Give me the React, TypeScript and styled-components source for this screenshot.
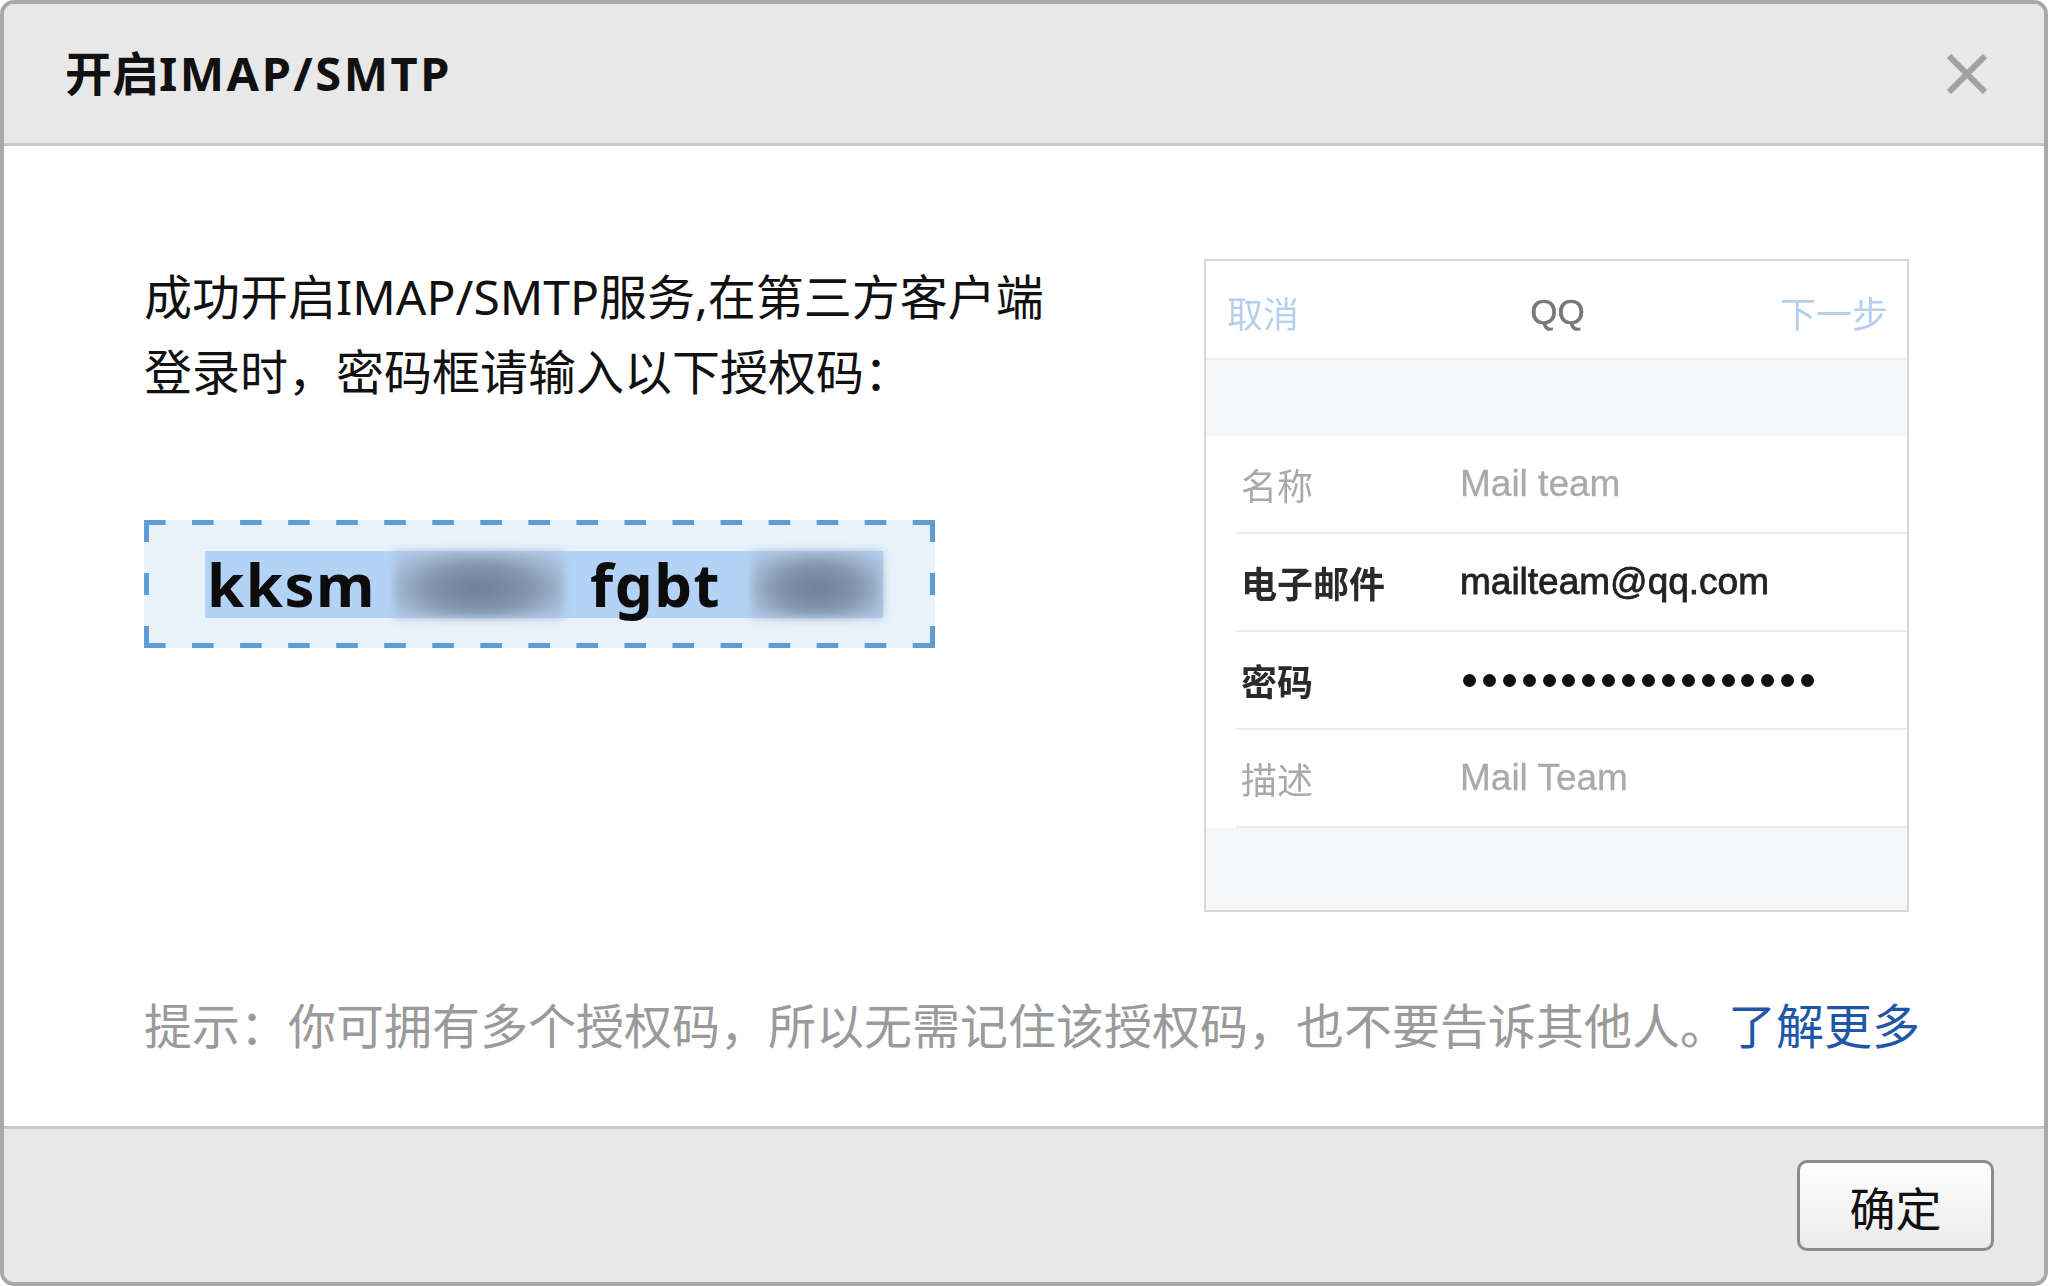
import React from 'react';
import styled, { createGlobalStyle } from 'styled-components';

const GlobalStyle = createGlobalStyle`
  html, body {
    margin: 0;
    padding: 0;
    background: #ffffff;
  }
  body {
    font-family: "Noto Sans", "Noto Sans CJK SC", sans-serif;
  }
`;

interface FieldRow {
  label: string;
  value?: string;
  strong: boolean;
  secret?: boolean;
}

const rows: FieldRow[] = [
  { label: '名称', value: 'Mail team', strong: false },
  { label: '电子邮件', value: 'mailteam@qq.com', strong: true },
  { label: '密码', strong: true, secret: true },
  { label: '描述', value: 'Mail Team', strong: false },
];

const App = () => {
  return (
    <>
      <GlobalStyle />
      <Dialog>
        <Header>
          <Title>
            开启<Latin>IMAP/SMTP</Latin>
          </Title>
          <CloseButton aria-label="关闭">
            <svg width="40" height="40" viewBox="0 0 40 40">
              <path d="M2 2 L38 38 M38 2 L2 38" stroke="#a2a2a2" strokeWidth="6" fill="none" />
            </svg>
          </CloseButton>
        </Header>

        <Body>
          <TopRow>
            <LeftColumn>
              <Intro>
                成功开启IMAP/SMTP服务,在第三方客户端
                <br />
                登录时，密码框请输入以下授权码：
              </Intro>
              <CodeBox>
                <Selection>
                  <Word $gap={18}>kksm</Word>
                  <Masked $w={170} $gap={24} />
                  <Word $gap={30}>fgbt</Word>
                  <Masked $w={132} />
                </Selection>
              </CodeBox>
            </LeftColumn>

            <Phone>
              <NavBar>
                <NavAction $align="left">取消</NavAction>
                <NavTitle>QQ</NavTitle>
                <NavAction $align="right">下一步</NavAction>
              </NavBar>
              <Spacer />
              {rows.map((row) => (
                <Row key={row.label}>
                  <RowInner>
                    <Label $strong={row.strong}>{row.label}</Label>
                    {row.secret ? (
                      <Dots>
                        {Array.from({ length: 18 }).map((_, i) => (
                          <Dot key={i} />
                        ))}
                      </Dots>
                    ) : (
                      <Value $strong={row.strong}>{row.value}</Value>
                    )}
                  </RowInner>
                </Row>
              ))}
              <BottomFill />
            </Phone>
          </TopRow>

          <Hint>
            提示：你可拥有多个授权码，所以无需记住该授权码，也不要告诉其他人。
            <MoreLink href="#">了解更多</MoreLink>
          </Hint>
        </Body>

        <Footer>
          <ConfirmButton>确定</ConfirmButton>
        </Footer>
      </Dialog>
    </>
  );
};

const Dialog = styled.div`
  width: 2048px;
  height: 1286px;
  box-sizing: border-box;
  border: 4px solid #a9a9a9;
  border-radius: 14px;
  overflow: hidden;
  display: flex;
  flex-direction: column;
  background: #ffffff;
`;

const Header = styled.header`
  flex: none;
  height: 142px;
  box-sizing: border-box;
  background: #e8e8e8;
  border-bottom: 3px solid #c8c8c8;
  display: flex;
  align-items: center;
  justify-content: space-between;
  padding: 0 57px 0 61px;
`;

const Title = styled.h1`
  margin: 0 0 6px;
  font-size: 47px;
  font-weight: 700;
  color: #111111;
`;

const Latin = styled.span`
  letter-spacing: 2.5px;
`;

const CloseButton = styled.button`
  width: 40px;
  height: 40px;
  padding: 0;
  border: none;
  background: transparent;
  display: flex;
  cursor: pointer;
`;

const Body = styled.main`
  flex: 1;
  padding: 113px 135px 0 140px;
  display: flex;
  flex-direction: column;
`;

const TopRow = styled.div`
  display: flex;
  justify-content: space-between;
  align-items: flex-start;
`;

const LeftColumn = styled.div`
  display: flex;
  flex-direction: column;
`;

const Intro = styled.p`
  margin: 0;
  font-size: 48px;
  line-height: 75px;
  color: #111111;
  white-space: nowrap;
`;

const dash = '#5e9dd1';

const CodeBox = styled.div`
  margin-top: 111px;
  width: 791px;
  height: 128px;
  box-sizing: border-box;
  display: flex;
  align-items: center;
  padding-left: 61px;
  background:
    linear-gradient(90deg, ${dash} 22px, transparent 22px) left top / 48.06px 5px repeat-x,
    linear-gradient(90deg, ${dash} 22px, transparent 22px) left bottom / 48.06px 5px repeat-x,
    linear-gradient(180deg, ${dash} 22px, transparent 22px) left top / 5px 53px repeat-y,
    linear-gradient(180deg, ${dash} 22px, transparent 22px) right top / 5px 53px repeat-y,
    #e9f2fa;
`;

const Selection = styled.div`
  display: flex;
  align-items: center;
  height: 67px;
  background: #b3d3f6;
`;

const Word = styled.span<{ $gap: number }>`
  font-family: "Noto Sans", sans-serif;
  font-size: 60px;
  font-weight: 700;
  line-height: 67px;
  color: #0c0c0c;
  letter-spacing: 1.5px;
  padding-left: 2px;
  margin-right: ${(p) => p.$gap}px;
`;

const Masked = styled.span<{ $w: number; $gap?: number }>`
  width: ${(p) => p.$w}px;
  height: 67px;
  margin-right: ${(p) => p.$gap ?? 0}px;
  background: radial-gradient(ellipse at 50% 55%, #6e7e96 0%, #8192aa 40%, #a6bcd7 75%, #b3cbe8 100%);
  filter: blur(4px);
`;

const Phone = styled.div`
  width: 705px;
  height: 653px;
  box-sizing: border-box;
  border: 2px solid #d7d7d7;
  display: flex;
  flex-direction: column;
  background: #ffffff;
  filter: blur(0.7px);
`;

const NavBar = styled.div`
  flex: none;
  height: 99px;
  box-sizing: border-box;
  display: grid;
  grid-template-columns: 1fr auto 1fr;
  align-items: center;
  padding: 4px 19px 0 21px;
  border-bottom: 2px solid #eef0f2;
`;

const NavAction = styled.span<{ $align: 'left' | 'right' }>`
  font-family: "Noto Sans CJK SC", sans-serif;
  font-size: 36px;
  color: #b5cfee;
  text-align: ${(p) => p.$align};
`;

const NavTitle = styled.span`
  font-family: "Liberation Sans", sans-serif;
  font-size: 35px;
  color: #777777;
  -webkit-text-stroke: 0.5px #777777;
`;

const Spacer = styled.div`
  flex: none;
  height: 76px;
  background: #f5f6f8;
`;

const Row = styled.div`
  flex: none;
  padding-left: 30px;
  background: #ffffff;
`;

const RowInner = styled.div`
  height: 96px;
  border-bottom: 2px solid #eaeaed;
  display: flex;
  align-items: center;
`;

const Label = styled.span<{ $strong: boolean }>`
  width: 224px;
  box-sizing: border-box;
  padding-left: 5px;
  font-family: "Noto Sans CJK SC", sans-serif;
  font-size: 36px;
  font-weight: ${(p) => (p.$strong ? 700 : 400)};
  color: ${(p) => (p.$strong ? '#2a2a2a' : '#a9a9a9')};
`;

const Value = styled.span<{ $strong: boolean }>`
  font-family: "Liberation Sans", sans-serif;
  font-size: 37px;
  color: ${(p) => (p.$strong ? '#222222' : '#aaaaaa')};
  -webkit-text-stroke: ${(p) => (p.$strong ? '0.8px #222222' : '0.3px #aaaaaa')};
`;

const Dots = styled.span`
  display: flex;
  gap: 6.9px;
  padding-left: 3px;
`;

const Dot = styled.span`
  width: 13px;
  height: 13px;
  border-radius: 50%;
  background: #111111;
`;

const BottomFill = styled.div`
  flex: 1;
  background: #f5f6f8;
`;

const Hint = styled.p`
  margin: 76px 0 0;
  font-size: 48px;
  line-height: 75px;
  color: #9a9a9a;
  white-space: nowrap;
`;

const MoreLink = styled.a`
  color: #1e57a8;
  text-decoration: none;
`;

const Footer = styled.footer`
  flex: none;
  height: 156px;
  box-sizing: border-box;
  border-top: 3px solid #c8c8c8;
  background: #e8e8e8;
  display: flex;
  justify-content: flex-end;
  align-items: flex-start;
  padding: 31px 50px 0 0;
`;

const ConfirmButton = styled.button`
  width: 197px;
  height: 91px;
  box-sizing: border-box;
  border: 3px solid #8b8b8b;
  border-radius: 10px;
  background: linear-gradient(#fefefe, #ebebeb);
  font-family: "Noto Sans CJK SC", sans-serif;
  font-size: 46px;
  line-height: 1;
  color: #111111;
  padding: 0;
  cursor: pointer;
`;

export default App;
